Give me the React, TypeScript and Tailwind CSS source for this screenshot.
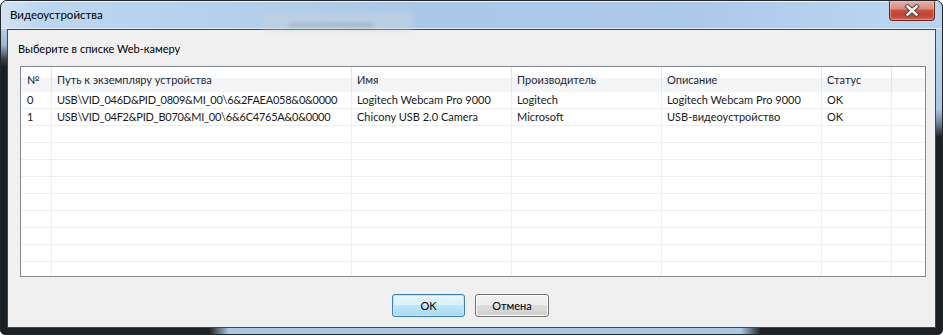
import React from 'react'

interface Device {
  num: string
  path: string
  name: string
  vendor: string
  desc: string
  status: string
}

const devices: Device[] = [
  { num: '0', path: 'USB\\VID_046D&PID_0809&MI_00\\6&2FAEA058&0&0000', name: 'Logitech Webcam Pro 9000', vendor: 'Logitech', desc: 'Logitech Webcam Pro 9000', status: 'OK' },
  { num: '1', path: 'USB\\VID_04F2&PID_B070&MI_00\\6&6C4765A&0&0000', name: 'Chicony USB 2.0 Camera', vendor: 'Microsoft', desc: 'USB-видеоустройство', status: 'OK' },
]

const font = "font-['Lato','Liberation_Sans',sans-serif]"

// ширины колонок как в ListView: разделитель — последний пиксель ячейки
const colW = ['w-[31px]', 'w-[300px]', 'w-[160px]', 'w-[150px]', 'w-[160px]', 'w-[70px]', 'w-[33px]']

function Row({ cells, header }: { cells: string[]; header?: boolean }) {
  return (
    <div
      className={
        header
          ? 'flex h-[25px] shrink-0 bg-[linear-gradient(to_bottom,#ffffff_0%,#ffffff_46%,#f3f4f6_46%,#f5f6f7_100%)]'
          : 'flex h-[17px] shrink-0 border-b border-[#efefef]'
      }
    >
      {colW.map((w, i) => (
        <div
          key={i}
          className={`${w} shrink-0 flex items-center overflow-hidden whitespace-nowrap ${i === 0 ? 'pl-[6px]' : 'pl-[5px]'} ${i === 1 && !header ? 'tracking-[-0.25px]' : ''} ${i < colW.length - 1 ? (header ? 'border-r border-[#e3e5e8]' : 'border-r border-[#efefef]') : ''} ${header ? 'text-[#1e2a3a]' : 'text-[#1a1a1a]'}`}
        >
          {cells[i] ?? ''}
        </div>
      ))}
    </div>
  )
}

function CloseButton() {
  return (
    <div className="absolute top-0 right-[7px] w-[46px] h-[20px] rounded-b-[4px] border border-t-0 border-[#6e2419] bg-[linear-gradient(to_bottom,#e6b0a4_0%,#d98d80_40%,#c8503f_50%,#c04333_75%,#cf6452_100%)] shadow-[inset_0_0_0_1px_rgba(255,220,210,0.4)] flex items-center justify-center">
      <svg width="16" height="13" viewBox="0 0 16 13">
        <path d="M3.5 2.5 L12.5 10.5 M12.5 2.5 L3.5 10.5" stroke="#4a4a4a" strokeWidth="4.4" strokeLinecap="square" />
        <path d="M3.5 2.5 L12.5 10.5 M12.5 2.5 L3.5 10.5" stroke="#ffffff" strokeWidth="2.4" strokeLinecap="square" />
      </svg>
    </div>
  )
}

export default function App() {
  const emptyRows = Array.from({ length: 9 })
  return (
    <div className={`${font} text-[11px] leading-[16px] w-[943px] h-[335px] relative flex flex-col overflow-hidden rounded-t-[7px] rounded-b-[5px] border border-[#23272d] bg-[#1c1f24]`}>
      {/* заголовок окна (Aero glass) */}
      <div className="h-[28px] shrink-0 relative flex items-center pl-[9px] border-b border-[#e2edf8] shadow-[inset_0_1px_0_#eef5fc] bg-[linear-gradient(to_right,#d2e3f4_0px,#bcd6ef_40px,#b5d1ed_200px,#a9c8e7_420px,#acc9e8_700px,#b7d4f0_880px)]">
        <div className="absolute left-[262px] top-[12px] w-[150px] h-[16px] rounded-[3px] bg-[#c2d2e1] blur-[3px] opacity-70" />
        <div className="absolute left-[288px] top-[22px] w-[84px] h-[4px] bg-[#8e9aa6] blur-[2px] opacity-50" />
        <span className="relative text-[#000] text-[11.5px] pt-[1px]">Видеоустройства</span>
        <CloseButton />
      </div>

      <div className="flex flex-1 min-h-0">
        <div className="w-[6px] shrink-0 bg-[linear-gradient(to_bottom,#b3cde6_0px,#9ab6d0_16px,#3a4048_30px,#1c1f24_38px)]" />
        {/* клиентская область */}
        <div className="w-[929px] shrink-0 border border-[#3d4753] bg-[#f0f0f0] flex flex-col">
          <div className="pl-[10px] pt-[11px] h-[36px] text-[#000]">Выберите в списке Web-камеру</div>
          <div className="ml-[12px] w-[906px] h-[211px] border border-[#828790] bg-white flex flex-col overflow-hidden">
            <Row header cells={['№', 'Путь к экземпляру устройства', 'Имя', 'Производитель', 'Описание', 'Статус', '']} />
            {devices.map(d => (
              <Row key={d.num} cells={[d.num, d.path, d.name, d.vendor, d.desc, d.status, '']} />
            ))}
            {emptyRows.map((_, i) => (
              <Row key={`e${i}`} cells={[]} />
            ))}
          </div>
          <div className="flex gap-[10px] pl-[384px] pt-[17px]">
            <button className="w-[73px] h-[23px] rounded-[3px] border border-[#3c7fb1] bg-[linear-gradient(to_bottom,#eaf6fd_0%,#d9f0fc_48%,#bee6fd_50%,#a7d9f5_100%)] shadow-[inset_0_0_0_1px_#c4e5f6] text-[#000] text-[11px]">
              OK
            </button>
            <button className="w-[74px] h-[23px] rounded-[3px] border border-[#707070] bg-[linear-gradient(to_bottom,#f2f2f2_0%,#ebebeb_48%,#dddddd_50%,#cfcfcf_100%)] shadow-[inset_0_0_0_1px_#fcfcfc] text-[#000] text-[11px]">
              Отмена
            </button>
          </div>
        </div>
        <div className="w-[6px] shrink-0 bg-[linear-gradient(to_bottom,#b9d5f0_0px,#a9c7e5_80px,#6e8397_94px,#1c1f24_108px)]" />
      </div>

      <div className="h-[6px] shrink-0 bg-[linear-gradient(to_right,#1c1f24_0px,#1c1f24_208px,#a8c8ea_228px,#a8c8ea_740px,#1c1f24_760px)]" />
    </div>
  )
}
